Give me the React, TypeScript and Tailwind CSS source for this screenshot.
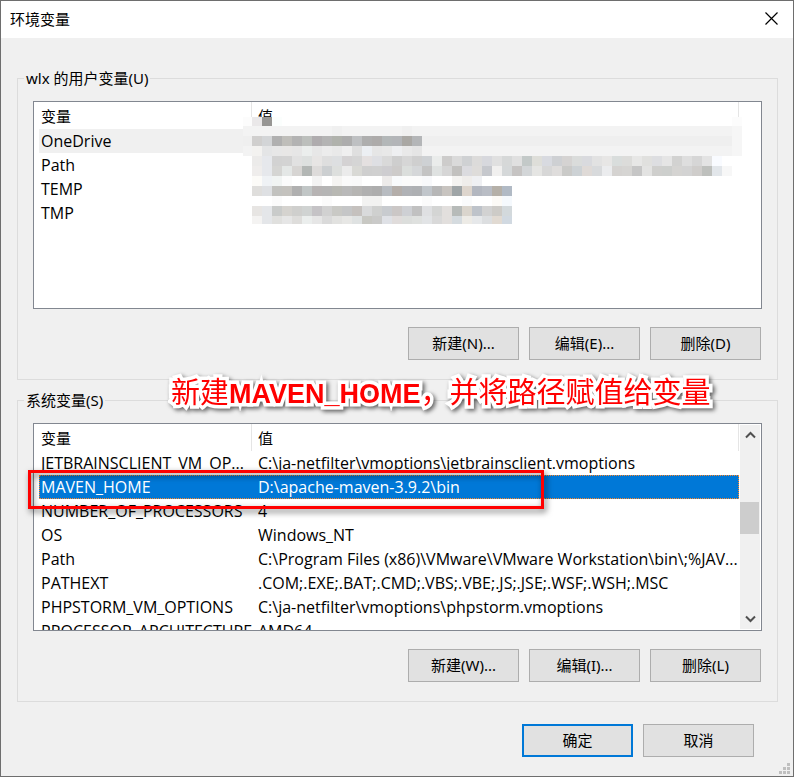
import type { ReactNode } from "react";

type Variable = { name: string; value: string; selected?: boolean; inactive?: boolean };

const userVariables: Variable[] = [
  { name: "OneDrive", value: "", inactive: true },
  { name: "Path", value: "" },
  { name: "TEMP", value: "" },
  { name: "TMP", value: "" },
];

const systemVariables: Variable[] = [
  { name: "JETBRAINSCLIENT_VM_OP...", value: "C:\\ja-netfilter\\vmoptions\\jetbrainsclient.vmoptions" },
  { name: "MAVEN_HOME", value: "D:\\apache-maven-3.9.2\\bin", selected: true },
  { name: "NUMBER_OF_PROCESSORS", value: "4" },
  { name: "OS", value: "Windows_NT" },
  { name: "Path", value: "C:\\Program Files (x86)\\VMware\\VMware Workstation\\bin\\;%JAV..." },
  { name: "PATHEXT", value: ".COM;.EXE;.BAT;.CMD;.VBS;.VBE;.JS;.JSE;.WSF;.WSH;.MSC" },
  { name: "PHPSTORM_VM_OPTIONS", value: "C:\\ja-netfilter\\vmoptions\\phpstorm.vmoptions" },
  { name: "PROCESSOR_ARCHITECTURE", value: "AMD64" },
];

// Colours of the censoring mosaic, one line per band of 10px cells; "-" leaves a cell clear.
const mosaic: { y: number; h: number; base?: string; cells: string }[] = [
  { y: 0, h: 9, cells: "eae8e9 979694 fbfefd" },
  { y: 9, h: 10, base: "#f3f3f3", cells: "f3f3f3 f3f3f3 f3f3f3 f3f3f3 f3f3f3 f3f3f3 f3f3f3 f3f3f3 f0f0f0 f3f3f3 f3f3f3 f3f3f3 f3f3f3 f3f3f3 f3f3f3 f0f0f0" },
  { y: 19, h: 10, base: "#efefef", cells: "d0cfce d3d5d7 b0b0b0 bfbeba b3b3b3 bcbfbc afacae b4b4b4 b0b2ac adadad bec0c2 aeaeae adabaa b3b7b8 b3b5b8 aaa8a4 b4b6b8" },
  { y: 29, h: 10, base: "#f3f3f3", cells: "f3f2f0 e4e5e6 e7e7e7 e8e7e6 e6e6e6 ebeeed e7e7e7 ececec e9e9e9 efefef dfdfdf eceff3 e6e6e6 e8e8e8 eeeff1 e9e9e9 e5e5e5" },
  { y: 39, h: 10, cells: "ecebea e6e8ec d2d2d2 d3d3d3 e1e1e1 dde0df e7e5e4 dedede dddfe1 d4d2d3 d5d5d5 e4e0e0 dedfe3 d9d9d9 cecece d6d6d6 cfcfcf ced1d4 eaeceb cdcccb dadada cfd1d3 dcdbda d7d8dd e0e0e0 d6d8d8 e0e0e0 c3c9c8 deded9 d8dae0 ced0d3 d5d3d2 dadcdb d9dade e2e2e2 e7e6e5 d9dddc dcdcda e7e7e6 e0e0de dddee1 e5e5e5 d2d2d1 dedede d6d6d6 e3e3e3 f9fbff" },
  { y: 49, h: 10, cells: "efedec e6e8ec d5d5d3 e4e7e6 d7d5d3 b3b7b5 dddbda cccfd1 dddfdd ebebeb d9d9d5 cfcfcf d0d0d0 cecdd0 cdcbca dbdedc d5d7d9 c4c4c4 dfe2e1 d6d6d6 c2c1bf dbdbdf dedcda c6c8cd f1f0ef d5d8d9 c6c4c3 d3d6d8 e5e5e3 d7d7d7 dfdddc cacac8 cdd2d5 dfdad7 d8dadc ebecee d5d3d1 d6d5d3 c6c6c6 e3e3e2 cfcfcd cdcfcd d5d4d2 d3d3d3 cfcdcb bec0bd e2e6ea f7f7f7" },
  { y: 59, h: 10, cells: "fcfbf8 eff2f5 f1f4f3 fbfbfb - - f3f3f3 - f5f4f2 fafafa f9f9f9 - - edebea f8fafc fbfbfb fbfbfb f8f9fb - - f4f3f1 efedeb eff0f3 - - -" },
  { y: 69, h: 10, cells: "dfdedc dee0e3 c2c2bf c4c2be b0b0b0 c1c6c6 b7b4b4 b5b5b5 b8b8b3 b9b9b9 b6b5b3 b0b0b0 adadad b8bcc1 b4aeaa b0b2b6 aeb0b3 c1c6cb b7b7b7 c8c4c0 9fa5a7 ddd5cd b3b7c0 b9bdc5 b5b0a8 b1bac5" },
  { y: 79, h: 10, cells: "- - fbfbfb - - - - fbfbfb - - - f2f2f1 f2f2f1 - - - - fbfbfb - - - fafbfc - - fcfaf6 f5f9fd" },
  { y: 89, h: 10, cells: "e7e5e3 e4e6e9 c9cbca d5d3cf cfcfcd d0d3d2 c5c3c6 d1d1d1 c9c9c5 c5c6c7 c5c1be d9dadb cfd0cf c8cbcf cbc7c6 ced0d4 c1c1c1 dfe0e2 d4d5d4 e2dfdd b7bbb9 dad5cd bec3ca d2d2d2 cdcbc7 d3d9dc" },
  { y: 99, h: 8, cells: "f4f3f2 e4e6e9 e0e0de e6e6e6 dedddb ebeeed e6e6e6 dadada e2e2e0 e7e7e5 dfe2e2 c8c8c3 cacac9 dfe1e6 e0dcdb dcdedc dfe1df e2e4e6 d9d9d9 e2dfdd d5dbdf edebe6 e6e8ea dcdee0 e1dad2 d1d9e1" },
];

function Mosaic() {
  return (
    <svg className="absolute top-[15px] left-[209px]" width="499" height="107" shapeRendering="crispEdges" aria-hidden="true">
      <rect x="0" y="0" width="9" height="9" fill="#fcfcfc" />
      <rect x="489" y="0" width="10" height="9" fill="#fcfcfc" />
      {mosaic.map((band) => (
        <g key={band.y}>
          {band.base && <rect x="0" y={band.y} width="489" height={band.h} fill={band.base} />}
          {band.base && <rect x="489" y={band.y} width="10" height={band.h} fill="#f6f6f6" />}
          {band.cells.split(" ").map((c, i) => (
            <rect key={i} x={9 + i * 10} y={band.y} width="10" height={band.h} fill={c === "-" ? "#ffffff" : "#" + c} />
          ))}
        </g>
      ))}
    </svg>
  );
}

function VariableTable({ rows, label }: { rows: Variable[]; label: string }) {
  return (
    <table aria-label={label} className="w-full table-fixed border-separate border-spacing-0">
      <colgroup>
        <col className="w-[213px]" />
        <col />
      </colgroup>
      <thead>
        <tr className="h-[27px] text-left">
          <th className="border-r border-[#e5e5e5] pl-0.5 font-normal">变量</th>
          <th className="border-r border-[#e5e5e5] pl-1.5 font-normal">值</th>
        </tr>
      </thead>
      <tbody className="font-['Open_Sans',sans-serif] text-[16px] leading-6">
        {rows.map((r) => (
          <tr
            key={r.name}
            aria-selected={!!r.selected}
            className={
              r.selected
                ? "h-6 bg-[#0078d7] text-white outline-1 -outline-offset-1 outline-[#ff8728] outline-dotted"
                : r.inactive
                  ? "h-6 bg-[#f0f0f0]"
                  : "h-6"
            }
          >
            <td className="whitespace-nowrap pl-0.5">{r.name}</td>
            <td className="whitespace-nowrap pl-1.5">{r.value}</td>
          </tr>
        ))}
      </tbody>
    </table>
  );
}

function Chevron({ down }: { down?: boolean }) {
  return (
    <svg width="11" height="8" viewBox="0 0 11 8" fill="none" stroke="#505050" strokeWidth="2" aria-hidden="true">
      <path d={down ? "M1 1.5L5.5 6L10 1.5" : "M1 6.5L5.5 2L10 6.5"} />
    </svg>
  );
}

function ScrollBar() {
  return (
    <div className="my-px mr-px ml-px flex w-5 shrink-0 flex-col bg-[#f0f0f0]">
      <button type="button" aria-label="向上滚动" className="flex h-5 items-center justify-center">
        <Chevron />
      </button>
      <div className="flex-1 pt-[57px]">
        <div className="h-8 w-[19px] bg-[#cdcdcd]" />
      </div>
      <button type="button" aria-label="向下滚动" className="flex h-5 items-center justify-center">
        <Chevron down />
      </button>
    </div>
  );
}

function PushButton({ children, primary }: { children: ReactNode; primary?: boolean }) {
  return (
    <button
      type="button"
      className={
        primary
          ? "h-[33px] w-[111px] border-2 border-[#0078d7] bg-[#e1e1e1] pb-0.5"
          : "h-[33px] w-[111px] border border-[#adadad] bg-[#e1e1e1] pb-0.5"
      }
    >
      {children}
    </button>
  );
}

function Group({ title, actions, children }: { title: string; actions: string[]; children: ReactNode }) {
  return (
    <fieldset className="min-w-0 border border-[#dcdcdc] px-[15px] pb-[19px]">
      <legend className="-ml-[9px] h-[22px] px-0.5 leading-[22px]">{title}</legend>
      <div className="relative mt-3 h-[208px] border border-[#828790] bg-white">{children}</div>
      <div className="mt-[18px] flex justify-end gap-2.5 pr-px">
        {actions.map((a) => (
          <PushButton key={a}>{a}</PushButton>
        ))}
      </div>
    </fieldset>
  );
}

export default function App() {
  return (
    <div className="relative flex min-h-screen flex-col border border-[#6e6e6e] bg-[#f0f0f0] font-['Noto_Sans','Noto_Sans_CJK_SC',sans-serif] text-[15px] leading-5 text-black">
      <header className="flex h-[37px] items-center justify-between bg-white pr-[15px] pb-0.5 pl-[9px]">
        <h1>环境变量</h1>
        <button type="button" aria-label="关闭" className="flex">
          <svg width="13" height="13" viewBox="0 0 13 13" stroke="#000" strokeWidth="1.2" aria-hidden="true">
            <path d="M0.5 0.5L12.5 12.5M12.5 0.5L0.5 12.5" />
          </svg>
        </button>
      </header>

      <main className="flex flex-col gap-[9px] pt-[29px] pr-[15px] pl-4">
        <Group title="wlx 的用户变量(U)" actions={["新建(N)...", "编辑(E)...", "删除(D)"]}>
          <div className="h-full overflow-hidden pr-[22px] pl-[5px]">
            <VariableTable rows={userVariables} label="用户变量" />
          </div>
          <Mosaic />
        </Group>

        <div className="relative">
          <Group title="系统变量(S)" actions={["新建(W)...", "编辑(I)...", "删除(L)"]}>
            <div className="flex h-full">
              <div className="min-w-0 flex-1 overflow-hidden pl-[5px]">
                <VariableTable rows={systemVariables} label="系统变量" />
              </div>
              <ScrollBar />
            </div>
          </Group>
          <p className="absolute -top-4 left-[154px] text-[29px] leading-[38px] whitespace-nowrap text-[#ff0000] drop-shadow-[2px_2px_2px_rgba(0,0,0,0.6)] [-webkit-text-stroke:7px_white] [paint-order:stroke_fill] [stroke-linejoin:round]">
            新建<span className="font-['Liberation_Sans',sans-serif] text-[27px] font-bold">MAVEN_HOME</span>，并将路径赋值给变量
          </p>
          <div className="absolute top-[81px] left-[11px] h-[39px] w-[516px] border-3 border-[#ff0000] drop-shadow-[2px_3px_3px_rgba(0,0,0,0.6)]" />
        </div>
      </main>

      <footer className="mt-[22px] mb-[19px] flex justify-end gap-2.5 pr-[39px]">
        <PushButton primary>确定</PushButton>
        <PushButton>取消</PushButton>
      </footer>

      <svg className="absolute right-[3px] bottom-0.5" width="11" height="11" fill="#bfbfbf" aria-hidden="true">
        <path d="M8 0h3v3H8zM4 4h3v3H4zM8 4h3v3H8zM0 8h3v3H0zM4 8h3v3H4zM8 8h3v3H8z" />
      </svg>
    </div>
  );
}
